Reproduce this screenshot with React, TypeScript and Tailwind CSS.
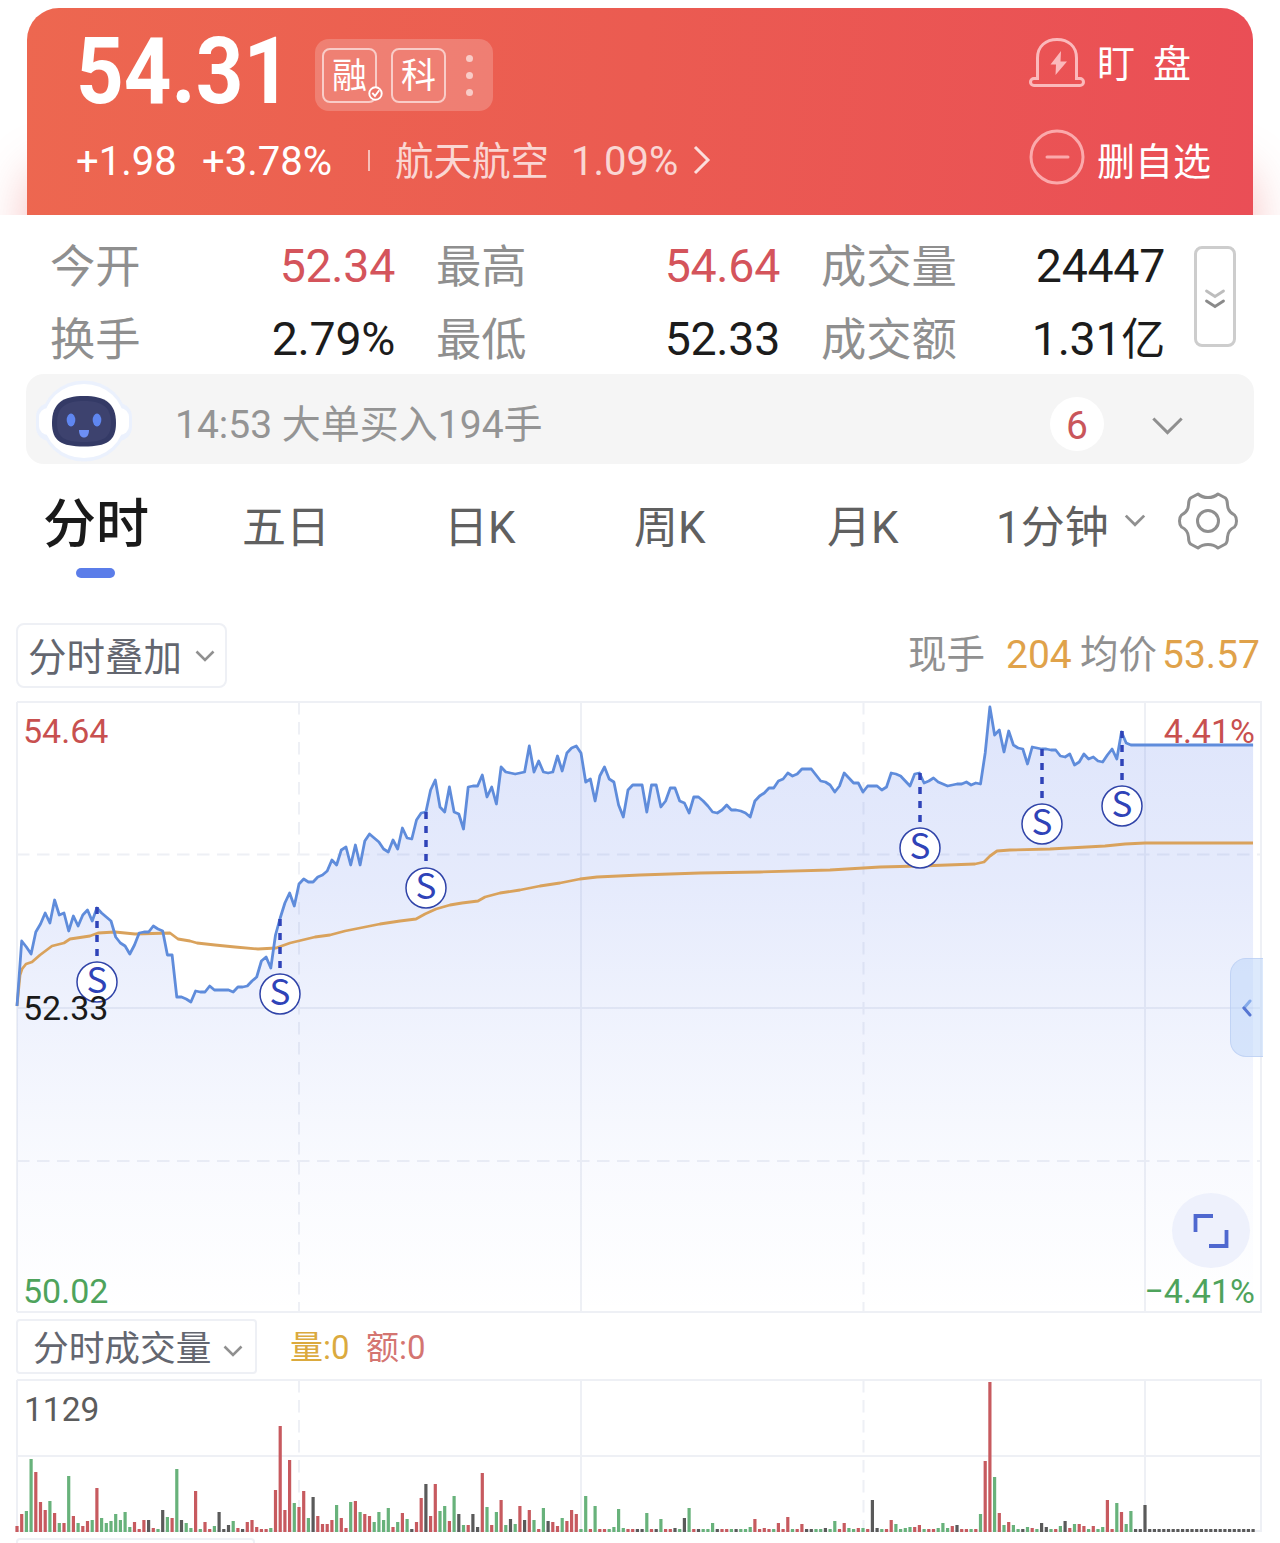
import type { ReactNode } from "react";
import { clsx } from "clsx";

const STEP = 4.7;
const LEFT = 17;

// One y value per trading minute
const PRICES = [
    1006, 941, 947, 954, 932, 924, 913, 923, 900, 915, 913, 931, 916, 926, 915, 910, 921, 908, 913, 917,
    921, 937, 943, 946, 954, 945, 933, 932, 932, 926, 929, 931, 955, 955, 997, 997, 999, 1002, 991, 992,
    992, 986, 990, 990, 990, 990, 992, 987, 987, 986, 981, 977, 961, 957, 968, 935, 918, 903, 893, 906,
    884, 879, 882, 882, 877, 875, 871, 860, 865, 850, 847, 865, 845, 865, 841, 834, 838, 842, 849, 852,
    840, 849, 828, 838, 839, 820, 813, 812, 790, 780, 807, 812, 787, 812, 814, 829, 787, 786, 786, 775,
    797, 787, 804, 767, 772, 773, 774, 773, 772, 746, 772, 761, 772, 773, 772, 756, 771, 753, 748, 746,
    753, 782, 779, 801, 776, 767, 779, 782, 805, 817, 790, 785, 785, 785, 812, 785, 785, 807, 801, 788,
    788, 801, 803, 813, 797, 797, 801, 806, 812, 813, 810, 805, 810, 810, 811, 813, 817, 801, 796, 793,
    788, 788, 781, 779, 773, 776, 774, 769, 769, 769, 775, 781, 782, 785, 792, 786, 773, 778, 783, 783,
    792, 786, 786, 786, 790, 787, 773, 774, 776, 781, 786, 774, 773, 783, 781, 778, 782, 784, 786, 785,
    784, 784, 782, 785, 783, 784, 753, 707, 735, 730, 752, 731, 745, 748, 749, 764, 747, 748, 749, 749,
    750, 750, 756, 757, 754, 765, 762, 754, 759, 757, 761, 762, 755, 749, 759, 732, 743, 745,
    ...Array(26).fill(745),
];

const AVERAGE = "17,1006 20,975 22,969 26,964 32,962 40,955 52,946 64,943 70,939 90,936 98,933 115,932 135,934 170,933 178,939 190,941 197,943 215,945 235,947 258,949 276,948 290,943 315,937 330,935 345,931 360,928 380,924 400,921 416,919 425,914 436,909 450,905 462,903 478,901 485,897 500,893 520,890 540,886 560,883 580,879 597,877 640,875 700,873 760,872 830,870 880,867 920,866 975,864 984,862 990,856 997,851 1010,850 1050,849 1105,846 1125,844 1145,843 1253,843";

// r = up, g = down, k = flat
const VOLUMES = (
    "r6 r18 g21 g73 r60 r30 r22 g31 r19 g9 r9 g56 r16 g9 r6 r11 g12 r44 g14 g9 " +
    "g11 g18 g12 g20 g5 r10 r3 r12 k12 r4 g3 k22 g15 r14 g63 k12 g9 g4 r41 g3 " +
    "r10 r3 g6 k20 k3 k7 g11 r4 k3 r10 r12 r5 r3 r3 g4 r42 r106 r22 r72 g29 " +
    "r25 r41 g14 k35 r16 r8 r8 r12 g27 r14 r4 g30 r31 g20 r18 r16 g10 g20 g12 g24 " +
    "r5 g10 r19 g13 k3 r10 r34 k48 r16 r48 g21 g26 r11 g36 k18 g7 r7 k18 k5 r59 " +
    "g25 r7 g20 r32 g7 k13 g8 r26 k12 r22 g12 r3 g24 k11 r10 r6 g14 r11 r22 r18 " +
    "g3 g36 r3 g26 r3 r3 g3 g5 g23 g4 r3 r3 k3 k3 g19 r3 k3 g13 r3 r3 " +
    "k4 g3 k14 g24 r3 k3 g3 g3 g9 k3 r3 r3 g3 k3 g3 g3 g5 r13 r3 r4 " +
    "r3 g3 r9 r3 r15 g3 r3 r8 k3 k3 g3 g3 k4 g3 g11 r3 r9 g4 g3 r4 " +
    "g4 r3 k32 k4 g3 r3 r12 g8 g3 g4 g5 r5 r7 g3 r3 r3 g4 g9 g4 r6 " +
    "k7 r3 r3 g3 r3 g18 r71 r150 g55 r19 g7 r10 g7 g3 k3 g5 r4 g3 k9 k5 " +
    "g3 r3 g6 k11 r4 g8 r8 r6 g3 r6 g3 g5 r32 r3 g29 r20 g8 g21 k3 k3 k27" +
    " k3".repeat(23)
).split(" ");

const BAR_COLORS: Record<string, string> = { r: "#c75a5f", g: "#68b27b", k: "#5a5a5a" };

const MARKERS = [
    { x: 97, from: 907, y: 982 },
    { x: 280, from: 919, y: 994 },
    { x: 426, from: 812, y: 888 },
    { x: 920, from: 773, y: 848 },
    { x: 1042, from: 749, y: 824 },
    { x: 1122, from: 731, y: 806 },
];

const STATS = [
    { label: "今开", value: "52.34", red: true },
    { label: "最高", value: "54.64", red: true },
    { label: "成交量", value: "24447" },
    { label: "换手", value: "2.79%" },
    { label: "最低", value: "52.33" },
    { label: "成交额", value: "1.31", unit: "亿" },
];

// Latin digits, set on the baseline of the surrounding Chinese text
function Num({ children }: { children: ReactNode }) {
    return <span className="font-[Roboto] leading-none">{children}</span>;
}

function Chevron({ className, stroke = 3 }: { className?: string; stroke?: number }) {
    return (
        <svg viewBox="0 0 20 12" fill="none" stroke="currentColor" strokeWidth={stroke} className={className}>
            <path d="M1.5 1.5 L10 10 L18.5 1.5" />
        </svg>
    );
}

function Header() {
    return (
        <header className="h-[215px] overflow-hidden px-[27px] pt-2">
            <div className="flex h-[207px] justify-between rounded-t-[32px] bg-linear-95 from-[#ed6750] via-[#eb5b51] to-[#ea4e56] text-white shadow-[0_160px_48px_rgba(235,85,85,0.38)]">
                <div className="pl-[49px]">
                    <div className="flex h-[112px] items-start">
                        <span className="w-[239px] text-[93px] leading-[109px] font-bold whitespace-nowrap">
                            <span className="inline-block origin-left scale-x-[0.895] font-[Roboto] leading-none">54.31</span>
                        </span>
                        <div className="mt-[31px] flex h-[72px] w-[178px] items-center rounded-[14px] bg-white/20 pl-[7px]">
                            <div className="relative flex size-[55px] items-center justify-center rounded-lg border-2 border-white/60 pb-[5px] text-[35px] leading-none">
                                融
                                <svg viewBox="0 0 14 14" className="absolute -right-[8px] bottom-0 size-[15px]" fill="none" stroke="#fff" strokeWidth="1.8">
                                    <circle cx="7" cy="7" r="5.8" fill="#ec7468" />
                                    <path d="M4 6.5 L6.5 9.3 L10.5 4" />
                                </svg>
                            </div>
                            <div className="ml-[14px] flex size-[55px] items-center justify-center rounded-lg border-2 border-white/60 pb-[5px] text-[35px] leading-none">
                                科
                            </div>
                            <div className="ml-5 flex flex-col gap-[10px]">
                                <i className="size-[7px] rounded-full bg-white/60" />
                                <i className="size-[7px] rounded-full bg-white/60" />
                                <i className="size-[7px] rounded-full bg-white/60" />
                            </div>
                        </div>
                    </div>
                    <div className="mt-[18px] flex h-10 items-center text-[40px] leading-10 whitespace-nowrap">
                        <span className="w-[126px] pt-[3px]"><Num>+1.98</Num></span>
                        <span className="w-[166px] pt-[3px]"><Num>+3.78%</Num></span>
                        <i className="mt-1 h-[21px] w-[2px] bg-white/60" />
                        <span className="ml-[25px] w-[176px] text-[38.5px] text-white/75">航天航空</span>
                        <span className="w-[122px] pt-[3px] text-white/75"><Num>1.09%</Num></span>
                        <svg viewBox="0 0 18 30" className="mt-1 h-[30px] w-[18px]" fill="none" stroke="#fff" strokeOpacity="0.8" strokeWidth="3">
                            <path d="M2 2 L15 15 L2 28" />
                        </svg>
                    </div>
                </div>
                <div className="w-[224px] text-[38px] whitespace-nowrap">
                    <div className="mt-[29px] flex h-[52px] items-center">
                        <svg viewBox="0 0 56 52" className="h-[52px] w-14" fill="none" stroke="#fbb9bb" strokeWidth="3">
                            <path d="M8.5 41.5 V21 C8.5 9 17 2.5 28 2.5 S47.500 9 47.500 21 V41.500 H51 a3.500 3.500 0 0 1 0 7 H5 a3.500 3.500 0 0 1 0 -7 Z" />
                            <path d="M32 14 L21.500 27.500 H27 L26.500 38 L38 24.500 H31.500 Z" fill="#fbb9bb" stroke="none" />
                        </svg>
                        <span className="ml-3 pb-[5px] leading-[47px]">盯</span>
                        <span className="ml-[18px] pb-[5px] leading-[47px]">盘</span>
                    </div>
                    <div className="mt-[40px] flex h-14 items-center">
                        <svg viewBox="0 0 56 56" className="size-14" fill="none" stroke="#fba9ab" strokeWidth="3">
                            <circle cx="28" cy="28" r="26" />
                            <path d="M18 28 H39" strokeLinecap="round" />
                        </svg>
                        <span className="ml-3 pt-[3px] leading-[53px]">删自选</span>
                    </div>
                </div>
            </div>
        </header>
    );
}

function Stats() {
    return (
        <section className="flex h-[159px] pt-3 pl-[50px]">
            <div className="grid h-[146px] grid-cols-[345px_344px_344px] grid-rows-2 gap-x-[41px]">
                {STATS.map((s) => (
                    <div key={s.label} className="flex items-center justify-between leading-[73px] whitespace-nowrap">
                        <span className="text-[45.3px] text-[#8f8f8f]">{s.label}</span>
                        <span className={clsx("pb-[4px] text-[46.5px] leading-[69px] tracking-[-0.3px]", s.red ? "text-[#d4545b]" : "text-[#1c1c1c]")}>
                            <Num>{s.value}</Num>
                            {s.unit && <span className="text-[44px] leading-none">{s.unit}</span>}
                        </span>
                    </div>
                ))}
            </div>
            <button className="mt-[19px] ml-[29px] flex h-[101px] w-[42px] items-center justify-center rounded-lg border-[3px] border-[#cdcdcd]">
                <svg viewBox="0 0 20 20" className="mt-[5px] size-5 shrink-0" fill="none" strokeWidth="2.8" strokeLinecap="round">
                    <path d="M1.500 2 L10 7.500 L18.500 2" stroke="#bdbdbd" />
                    <path d="M1.500 12 L10 17.500 L18.500 12" stroke="#8a8a8a" />
                </svg>
            </button>
        </section>
    );
}

function Robot() {
    return (
        <svg viewBox="0 0 100 84" className="h-[84px] w-[100px]">
            <g fill="#ebf1fd">
                <ellipse cx="50" cy="42" rx="43" ry="40.500" />
                <rect x="2" y="24" width="96" height="38" rx="14" />
            </g>
            <g fill="#fff">
                <ellipse cx="50" cy="42" rx="40" ry="37" />
                <rect x="5" y="29" width="90" height="27" rx="9" />
            </g>
            <path d="M50 17 C71 17 82 24 82 44 C82 62 73 67.500 50 67.500 S18 62 18 44 C18 24 29 17 50 17 Z" fill="#343a66" />
            <path d="M50 22 C67 22 77 27 77 44 C77 59 69 63 50 63 S23 59 23 44 C23 27 33 22 50 22 Z" fill="#3d426e" />
            <ellipse cx="37" cy="41" rx="4.300" ry="6.500" fill="#5f86f0" />
            <ellipse cx="63" cy="41" rx="4.300" ry="6.500" fill="#5f86f0" />
            <path d="M45 51 H55 C55 56 53 58.500 50 58.500 S45 56 45 51 Z" fill="#6d8ff5" />
        </svg>
    );
}

function AlertBar() {
    return (
        <section className="mx-[26px] flex h-[90px] items-center rounded-[18px] bg-[#f5f5f5] pt-1 pl-2">
            <Robot />
            <span className="ml-[41px] w-[875px] text-[39px] leading-[80px] whitespace-nowrap text-[#949494]">
                <Num>14:53 </Num>大单买入<Num>194</Num>手
            </span>
            <span className="mt-[5px] size-[54px] rounded-full bg-white text-center text-[39px] leading-[50px] text-[#c9565b]">
                <Num>6</Num>
            </span>
            <Chevron className="mt-[10px] ml-[46px] h-[20px] w-[35px] text-[#8f8f8f]" stroke={1.8} />
        </section>
    );
}

function Tabs() {
    return (
        <nav className="flex h-[159px] pt-[18px] pl-[43px] text-[44px] leading-[85px] whitespace-nowrap text-[#606060]">
            <div className="flex w-[199px] flex-col">
                <span className="text-[53px] leading-[76px] font-medium text-[#1a1a1a]">分时</span>
                <i className="mt-[10px] ml-[33px] h-[10px] w-[39px] rounded-full bg-[#5b7de9]" />
            </div>
            <span className="w-[202px]">五日</span>
            <span className="w-[190px]">日<Num>K</Num></span>
            <span className="w-[193px]">周<Num>K</Num></span>
            <span className="w-[169px]">月<Num>K</Num></span>
            <span className="w-[115px]"><Num>1</Num>分钟</span>
            <Chevron className="mt-[32px] ml-[13px] h-[13px] w-[22px] shrink-0 text-[#909090]" stroke={2.6} />
            <svg viewBox="0 0 60 58" className="mt-[10px] ml-[32px] h-[58px] w-[60px] shrink-0" fill="none" stroke="#8f8f8f" strokeWidth="3" strokeLinejoin="round">
                <path d="M20 2 Q24 5.500 30 5.500 T40 2 L47.500 6 Q49.500 8 49.500 13 Q50 20 56.500 23 Q58.500 25 58.500 29 Q58.500 33 56.500 35 Q50 38 49.500 45 Q49.500 50 47.500 52 L40 56 Q36 52.500 30 52.500 T20 56 L12.500 52 Q10.500 50 10.500 45 Q10 38 3.500 35 Q1.500 33 1.500 29 Q1.500 25 3.500 23 Q10 20 10.500 13 Q10.500 8 12.500 6 Z" />
                <circle cx="30" cy="29" r="10.500" />
            </svg>
        </nav>
    );
}

function PriceToolbar() {
    return (
        <div className="flex h-[65px] items-center justify-between pr-[20px] pl-4 whitespace-nowrap">
            <button className="flex h-[65px] w-[211px] items-center rounded-lg border-2 border-[#eef0f5] pl-[10px] text-[38.500px] leading-[56px] text-[#63666f]">
                <span className="pb-1">分时叠加</span>
                <Chevron className="ml-[13px] h-[12px] w-[20px] text-[#909090]" stroke={2.6} />
            </button>
            <div className="flex pb-[9px] text-[38.500px] leading-[56px] text-[#909090]">
                <span className="w-[98px]">现手</span>
                <span className="w-[74px] text-[39px] text-[#e0a24a]"><Num>204</Num></span>
                <span className="w-[82px]">均价</span>
                <span className="text-[39px] text-[#e0a24a]"><Num>53.57</Num></span>
            </div>
        </div>
    );
}

function PriceChart() {
    const line = PRICES.map((y, i) => `${(LEFT + i * STEP).toFixed(1)},${y}`).join(" ");

    return (
        <div className="relative h-[631px]">
            <svg viewBox="0 688 1280 631" className="block h-[631px] w-[1280px]">
                <defs>
                    <linearGradient id="area" gradientUnits="userSpaceOnUse" x1="0" y1="702" x2="0" y2="1312">
                        <stop offset="0" stopColor="#5a7cec" stopOpacity="0.2" />
                        <stop offset="0.3" stopColor="#5a7cec" stopOpacity="0.155" />
                        <stop offset="0.5" stopColor="#5a7cec" stopOpacity="0.1" />
                        <stop offset="0.75" stopColor="#5a7cec" stopOpacity="0.04" />
                        <stop offset="1" stopColor="#5a7cec" stopOpacity="0" />
                    </linearGradient>
                </defs>
                <g stroke="#eef0f5" strokeWidth="2" fill="none">
                    <path d="M17 702 H1262 M17 1312 H1262 M17 1008 H1262 M17 702 V1312 M1261 702 V1312 M581 702 V1312 M1145 702 V1312" />
                    <path d="M17 854.500 H1262 M17 1161 H1262 M299 702 V1312 M863.500 702 V1312" strokeDasharray="12.500 7.500" />
                </g>
                <polygon points={`17,1312 ${line} 1253,1312`} fill="url(#area)" />
                <polyline points={AVERAGE} fill="none" stroke="#d9a25c" strokeWidth="2.800" strokeLinejoin="round" />
                <polyline points={line} fill="none" stroke="#5f8cdb" strokeWidth="2.800" strokeLinejoin="round" />
                <g fontSize="34">
                    {MARKERS.map((m) => (
                        <g key={m.x}>
                            <path d={`M${m.x} ${m.from} V${m.y - 24}`} stroke="#2f43b8" strokeWidth="3.500" strokeDasharray="7 7" />
                            <circle cx={m.x} cy={m.y} r="20" fill="#fff" stroke="#2f43a8" strokeWidth="1.500" />
                            <text x={m.x} y={m.y + 11} textAnchor="middle" fontSize="35" fill="#2f43b8">S</text>
                        </g>
                    ))}
                    <g className="font-[Roboto]">
                        <text x="23" y="743" fill="#c8504f">54.64</text>
                        <text x="23" y="1020" fill="#1a1a1a">52.33</text>
                        <text x="23" y="1303" fill="#4ea35c">50.02</text>
                        <text x="1255" y="743" textAnchor="end" fill="#c8504f">4.41%</text>
                        <text x="1255" y="1303" textAnchor="end" fill="#4ea35c">−4.41%</text>
                    </g>
                </g>
            </svg>
            <button className="absolute top-[270px] right-[17px] flex h-[99px] w-[33px] items-center justify-center rounded-l-[16px] border border-r-0 border-[#b9cdf2]/70 bg-[#b9d3fa]/50">
                <svg viewBox="0 0 10 18" className="h-[18px] w-[10px]" fill="none" strokeWidth="3" strokeLinecap="round">
                    <path d="M8 2 L2 9" stroke="#86abea" />
                    <path d="M2 9 L8 16" stroke="#5676d2" />
                </svg>
            </button>
            <button className="absolute top-[505px] right-[30px] flex h-[75px] w-[78px] items-center justify-center rounded-[50%] bg-[#eef1fc]">
                <svg viewBox="0 0 36 34" className="h-[34px] w-[36px]" fill="none" stroke="#4f68cf" strokeWidth="3.800">
                    <path d="M2.500 18 V2 H20 M33.500 16 V32 H16" />
                </svg>
            </button>
        </div>
    );
}

function VolumeToolbar() {
    return (
        <div className="flex h-[55px] items-center pl-4 text-[33px] leading-[50px] whitespace-nowrap">
            <button className="flex h-[55px] w-[241px] items-center rounded border-2 border-[#eef0f5] pl-[15px] text-[35.700px] text-[#63666f]">
                <span className="pb-[2px] leading-[48px]">分时成交量</span>
                <Chevron className="mt-2 ml-[12px] h-[12px] w-[20px] text-[#909090]" stroke={2.6} />
            </button>
            <span className="ml-[33px] w-[76px] pb-[3px] text-[#dbaa3e]">量<Num>:0</Num></span>
            <span className="pb-[3px] text-[#d47571]">额<Num>:0</Num></span>
        </div>
    );
}

function VolumeChart() {
    return (
        <svg viewBox="0 1374 1280 164" className="block h-[164px] w-[1280px]">
            <g stroke="#eef0f5" strokeWidth="2" fill="none">
                <path d="M17 1380 H1262 M17 1456 H1262 M17 1531 H1262 M17 1380 V1532 M1261 1380 V1532 M581 1380 V1532 M1145 1380 V1532" />
                <path d="M299 1380 V1532 M863.500 1380 V1532" strokeDasharray="12.500 7.500" />
            </g>
            {VOLUMES.map((v, i) => {
                const h = Number(v.slice(1));
                return <rect key={i} x={LEFT + i * STEP - 1.6} y={1532 - h} width="3.200" height={h} fill={BAR_COLORS[v[0]]} />;
            })}
            <text x="24" y="1420.500" fontSize="33.500" fill="#5c5c5c" className="font-[Roboto]">1129</text>
        </svg>
    );
}

export default function App() {
    return (
        <main className="h-[1543px] w-[1280px] overflow-hidden bg-white font-['Noto_Sans_CJK_SC',sans-serif]">
            <Header />
            <Stats />
            <AlertBar />
            <Tabs />
            <PriceToolbar />
            <PriceChart />
            <VolumeToolbar />
            <VolumeChart />
            <div className="ml-4 h-10 w-[239px] rounded border-2 border-[#eef0f5]" />
        </main>
    );
}
